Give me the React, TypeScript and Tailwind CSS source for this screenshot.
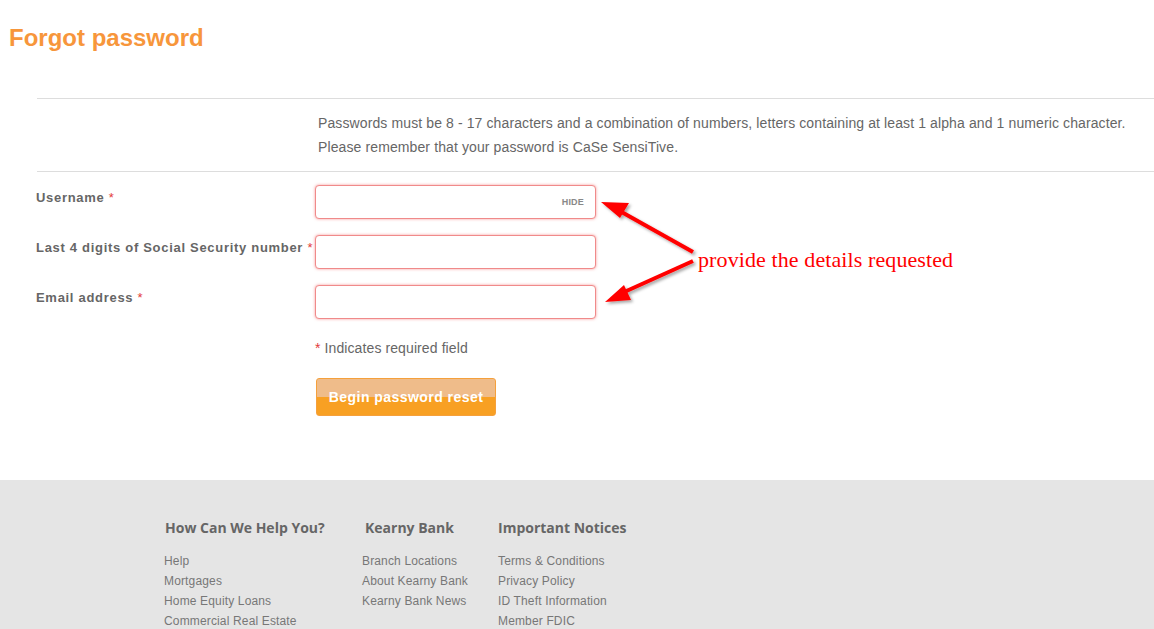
import React from 'react';

const fields = [
  { label: 'Username', hide: true },
  { label: 'Last 4 digits of Social Security number', hide: false },
  { label: 'Email address', hide: false },
];

const footerCols = [
  { title: 'How Can We Help You?', width: 'w-[197px]', links: ['Help', 'Mortgages', 'Home Equity Loans', 'Commercial Real Estate'] },
  { title: 'Kearny Bank', width: 'w-[136px]', links: ['Branch Locations', 'About Kearny Bank', 'Kearny Bank News'] },
  { title: 'Important Notices', width: 'w-[160px]', links: ['Terms & Conditions', 'Privacy Policy', 'ID Theft Information', 'Member FDIC'] },
];

export default function App() {
  return (
    <div className="relative w-[1154px] h-[629px] overflow-hidden bg-white font-['Liberation_Sans',Arial,sans-serif]">
      {/* Heading */}
      <h1 className="pl-[9px] pt-[24px] text-[24px] leading-[28px] font-bold text-[#f7963b]">Forgot password</h1>

      {/* Form */}
      <div className="ml-[37px] mt-[46px]">
        <div className="border-t border-[#dddddd] pt-[12px] pb-[12px] pl-[281px]">
          <p className="text-[14px] leading-[24px] tracking-[0.11px] text-[#666666]">
            Passwords must be 8 - 17 characters and a combination of numbers, letters containing at least 1 alpha and 1 numeric character.
          </p>
          <p className="text-[14px] leading-[24px] tracking-[0.11px] text-[#666666]">Please remember that your password is CaSe SensiTive.</p>
        </div>
        <div className="border-t border-[#dddddd] pt-[13px]">
          {fields.map((f) => (
            <div key={f.label} className="flex h-[50px]">
              <label className="w-[279px] -ml-[1px] pt-[5px] text-[13px] leading-[16px] font-bold tracking-[0.7px] text-[#666666] whitespace-nowrap">
                {f.label} <span className="text-[#e33b3b] font-normal">*</span>
              </label>
              <div className="relative w-[281px] h-[34px] rounded-[4px] border border-[#f08a8a] bg-white shadow-[0_0_3px_rgba(240,80,80,0.6)]">
                {f.hide && (
                  <span className="absolute right-[11px] top-[11px] text-[9px] leading-[10px] font-bold text-[#888888] tracking-[0.2px]">
                    HIDE
                  </span>
                )}
              </div>
            </div>
          ))}
          <p className="ml-[278px] mt-[4px] text-[14px] leading-[18px] tracking-[0.1px] text-[#666666]">
            <span className="text-[#e33b3b]">*</span> Indicates required field
          </p>
          <button className="ml-[279px] mt-[21px] w-[180px] h-[38px] rounded-[3px] border border-[#f5a03c] bg-[linear-gradient(to_bottom,#efbc8a_0,#efbc8a_50%,#f8a023_50%,#f8a023_100%)] text-[14px] font-bold tracking-[0.45px] text-white">
            Begin password reset
          </button>
        </div>
      </div>

      {/* Footer */}
      <div className="absolute left-0 right-0 top-[480px] bottom-0 bg-[#e5e5e5]">
        <div className="flex pl-[165px] pt-[39px]">
          {footerCols.map((c, i) => (
            <div key={c.title} className={c.width}>
              <h3
                className={`font-['Open_Sans',sans-serif] text-[14px] leading-[18px] font-bold text-[#666666] ${i === 1 ? 'ml-[3px]' : ''}`}
              >
                {c.title}
              </h3>
              <ul className={`mt-[14px] ${i === 0 ? '-ml-[1px]' : 'ml-0'}`}>
                {c.links.map((l) => (
                  <li key={l} className="text-[12px] leading-[20px] tracking-[0.15px] text-[#777777]">{l}</li>
                ))}
              </ul>
            </div>
          ))}
        </div>
      </div>

      {/* Annotation overlay */}
      <svg className="absolute left-0 top-0 pointer-events-none" width="1154" height="629">
        <defs>
          <filter id="sh" x="-20%" y="-20%" width="140%" height="140%">
            <feDropShadow dx="2" dy="2" stdDeviation="1.5" floodColor="#000" floodOpacity="0.35" />
          </filter>
        </defs>
        <g filter="url(#sh)" fill="#ff0000" stroke="#ff0000">
          <line x1="693" y1="252" x2="618" y2="210" strokeWidth="4" />
          <polygon points="601,202 629,203 620,218" stroke="none" />
          <line x1="693" y1="261" x2="622" y2="293" strokeWidth="4" />
          <polygon points="605,302 624,285 631,300" stroke="none" />
        </g>
      </svg>
      <span className="absolute left-[698px] top-[247px] font-['Liberation_Serif',serif] text-[22px] leading-[25px] tracking-[0.1px] text-[#ff0000]">
        provide the details requested
      </span>
    </div>
  );
}
